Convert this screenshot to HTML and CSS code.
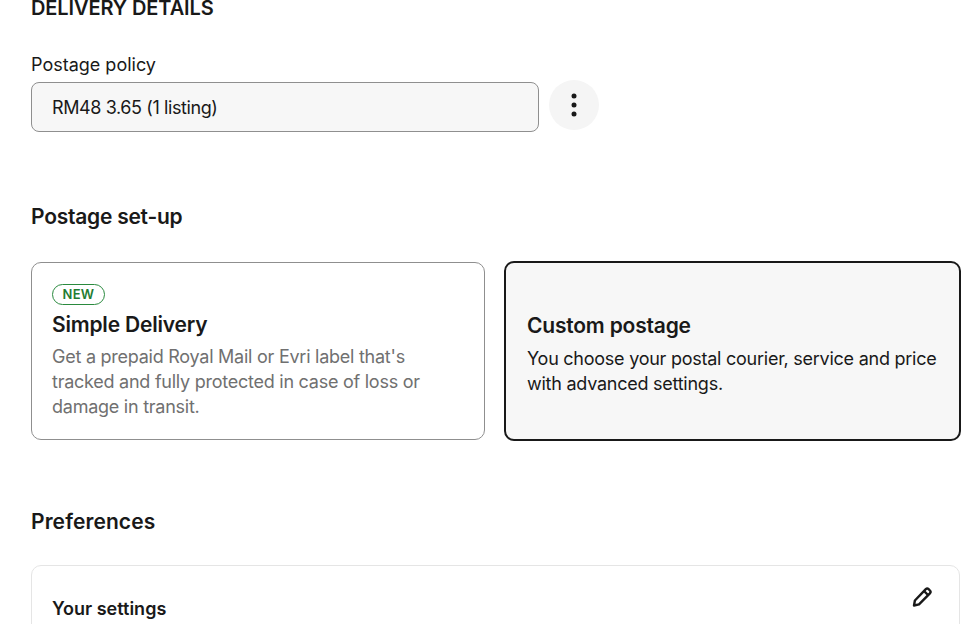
FILE: index.html
```html
<!DOCTYPE html>
<html lang="en">
<head>
<meta charset="utf-8">
<title>Delivery details</title>
<link rel="stylesheet" href="styles.css">
</head>
<body>
<main class="page">
  <h1 class="page-title">DELIVERY DETAILS</h1>
  <label class="field-label">Postage policy</label>
  <div class="policy-row">
    <div class="select">RM48 3.65 (1 listing)</div>
    <button class="icon-btn" aria-label="More">
      <svg width="24" height="24" viewBox="0 0 24 24"><circle cx="12" cy="3" r="2.5"/><circle cx="12" cy="12" r="2.5"/><circle cx="12" cy="21" r="2.5"/></svg>
    </button>
  </div>
  <h2 class="section-title setup-title">Postage set-up</h2>
  <div class="cards">
    <div class="card">
      <span class="badge">NEW</span>
      <h3 class="card-title">Simple Delivery</h3>
      <p class="card-text muted">Get a prepaid Royal Mail or Evri label that's tracked and fully protected in case of loss or damage in transit.</p>
    </div>
    <div class="card card-selected">
      <h3 class="card-title">Custom postage</h3>
      <p class="card-text">You choose your postal courier, service and price with advanced settings.</p>
    </div>
  </div>
  <h2 class="section-title pref-title">Preferences</h2>
  <section class="settings">
    <h3 class="settings-title">Your settings</h3>
    <svg class="edit" width="22" height="22" viewBox="0 0 22 22" fill="none" stroke="#191919" stroke-width="2.4" stroke-linejoin="round"><path d="M3 19.5l.9-5L14.8 3.2a2 2 0 0 1 2.8 0l1.3 1.3a2 2 0 0 1 0 2.8L8 18.4z"/><path d="M13 5l4 4"/></svg>
  </section>
</main>
</body>
</html>
```
FILE: styles.css
```css
html, body { margin: 0; padding: 0; background: #fff; height: 100%; overflow: hidden; }
body { font-family: Inter, "Liberation Sans", sans-serif; color: #191919; }
h1, h2, h3, p { margin: 0; }
.page { padding-left: 31px; margin-top: -4px; }
.page-title { font-size: 20px; line-height: 24px; font-weight: 600; letter-spacing: -0.1px; }
.field-label { display: block; margin-top: 33px; font-size: 18px; line-height: 24px; }
.policy-row { display: flex; align-items: center; gap: 10px; margin-top: 5px; }
.select { box-sizing: border-box; width: 508px; height: 50px; padding: 0 20px; display: flex; align-items: center; background: #f7f7f7; border: 1px solid #8f8f8f; border-radius: 8px; font-size: 18px; letter-spacing: -0.4px; }
.icon-btn { width: 50px; height: 50px; margin-top: -4px; padding: 0; border: 0; border-radius: 50%; background: #f5f5f5; display: flex; align-items: center; justify-content: center; }
.icon-btn svg { fill: #191919; }
.section-title { font-size: 21px; line-height: 26px; font-weight: 600; }
.setup-title { margin-top: 72px; letter-spacing: -0.25px; }
.cards { display: flex; gap: 19px; margin-top: 31px; align-items: center; }
.card { box-sizing: border-box; width: 454px; height: 178px; padding: 0 20px; border: 1px solid #8f8f8f; border-radius: 10px; display: flex; flex-direction: column; align-items: flex-start; justify-content: center; background: #fff; }
.card-selected { width: 457px; height: 180px; border: 2px solid #191919; background: #f7f7f7; padding: 7px 21px 0; flex: none; }
.badge { box-sizing: border-box; height: 21px; padding: 0 9.5px; border: 1px solid #2a8a3e; border-radius: 11px; color: #1f7d33; font-size: 13px; line-height: 19px; font-weight: 600; letter-spacing: 0.3px; }
.card-title { margin-top: 7px; font-size: 21px; line-height: 26px; font-weight: 600; letter-spacing: -0.2px; }
.card-selected .card-title { margin-top: 0; }
.card-text { margin-top: 6px; font-size: 18px; line-height: 25px; letter-spacing: -0.25px; }
.card-selected .card-text { margin-top: 7px; }
.muted { color: #707070; }
.pref-title { margin-top: 68px; letter-spacing: 0.1px; }
.settings { box-sizing: border-box; position: relative; width: 929px; height: 120px; margin-top: 30px; padding: 31px 20px; border: 1px solid #e5e5e5; border-radius: 10px; }
.settings-title { font-size: 18px; line-height: 24px; font-weight: 600; }
.edit { position: absolute; right: 26px; top: 20px; }
```
